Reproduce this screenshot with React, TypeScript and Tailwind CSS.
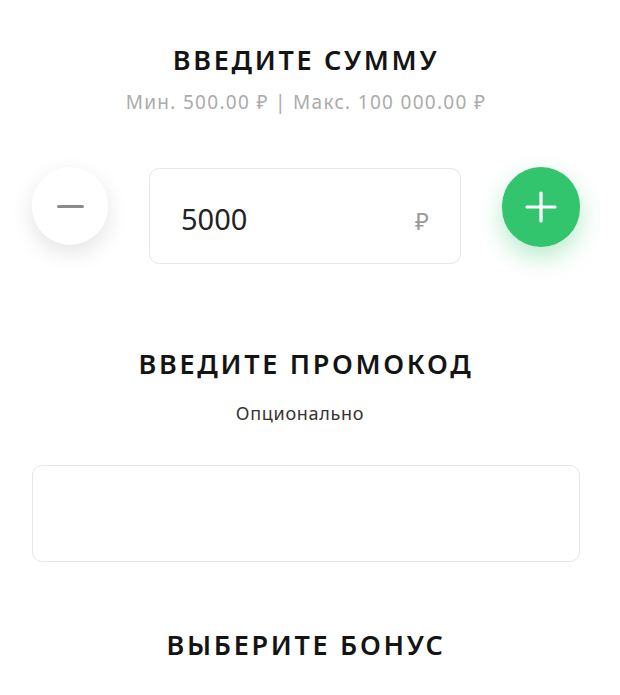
import React from "react";

export default function App() {
  return (
    <div className="min-h-[695px] w-[620px] bg-white" style={{ fontFamily: '"Noto Sans", "Open Sans", sans-serif' }}>
      <div className="ml-[32px] w-[548px] flex flex-col items-center pt-[44px]">
        <h1 className="text-[27px] leading-[32px] font-semibold text-[#141414] tracking-[2.7px]">ВВЕДИТЕ СУММУ</h1>
        <p className="mt-[14px] text-[19px] leading-[24px] text-[#ababab] tracking-[1.3px]">Мин. 500.00 ₽ | Макс. 100 000.00 ₽</p>

        <div className="mt-[53px] w-full flex items-start justify-between">
          <button className="w-[76px] h-[78px] rounded-full bg-white shadow-[0_8px_22px_rgba(0,0,0,0.11)] flex items-center justify-center">
            <span className="block w-[27px] h-[3px] rounded bg-[#8a8a8a]" />
          </button>
          <div className="mt-[1px] w-[312px] h-[96px] rounded-[10px] border border-[#e6e6e6] bg-white flex items-center justify-between pl-[31px] pr-[31px]">
            <span className="text-[29px] text-[#222] mt-[6px]">5000</span>
            <span className="text-[24px] text-[#9a9a9a] mt-[10px]">₽</span>
          </div>
          <button className="w-[78px] h-[80px] rounded-full bg-[#33c46e] shadow-[0_10px_24px_rgba(51,196,110,0.35)] flex items-center justify-center">
            <svg width="32" height="32" viewBox="0 0 32 32">
              <path d="M16 2v28M2 16h28" stroke="white" strokeWidth="3.2" strokeLinecap="round" />
            </svg>
          </button>
        </div>

        <h2 className="mt-[84px] text-[27px] leading-[32px] font-semibold text-[#141414] tracking-[2.7px]">ВВЕДИТЕ ПРОМОКОД</h2>
        <p className="mt-[22px] mr-[12px] text-[18px] leading-[22px] text-[#333] tracking-[0.7px]">Опционально</p>

        <div className="mt-[41px] w-full h-[97px] rounded-[10px] border border-[#e6e6e6] bg-white" />

        <h2 className="mt-[67px] text-[27px] leading-[32px] font-semibold text-[#141414] tracking-[2.7px]">ВЫБЕРИТЕ БОНУС</h2>
      </div>
    </div>
  );
}
